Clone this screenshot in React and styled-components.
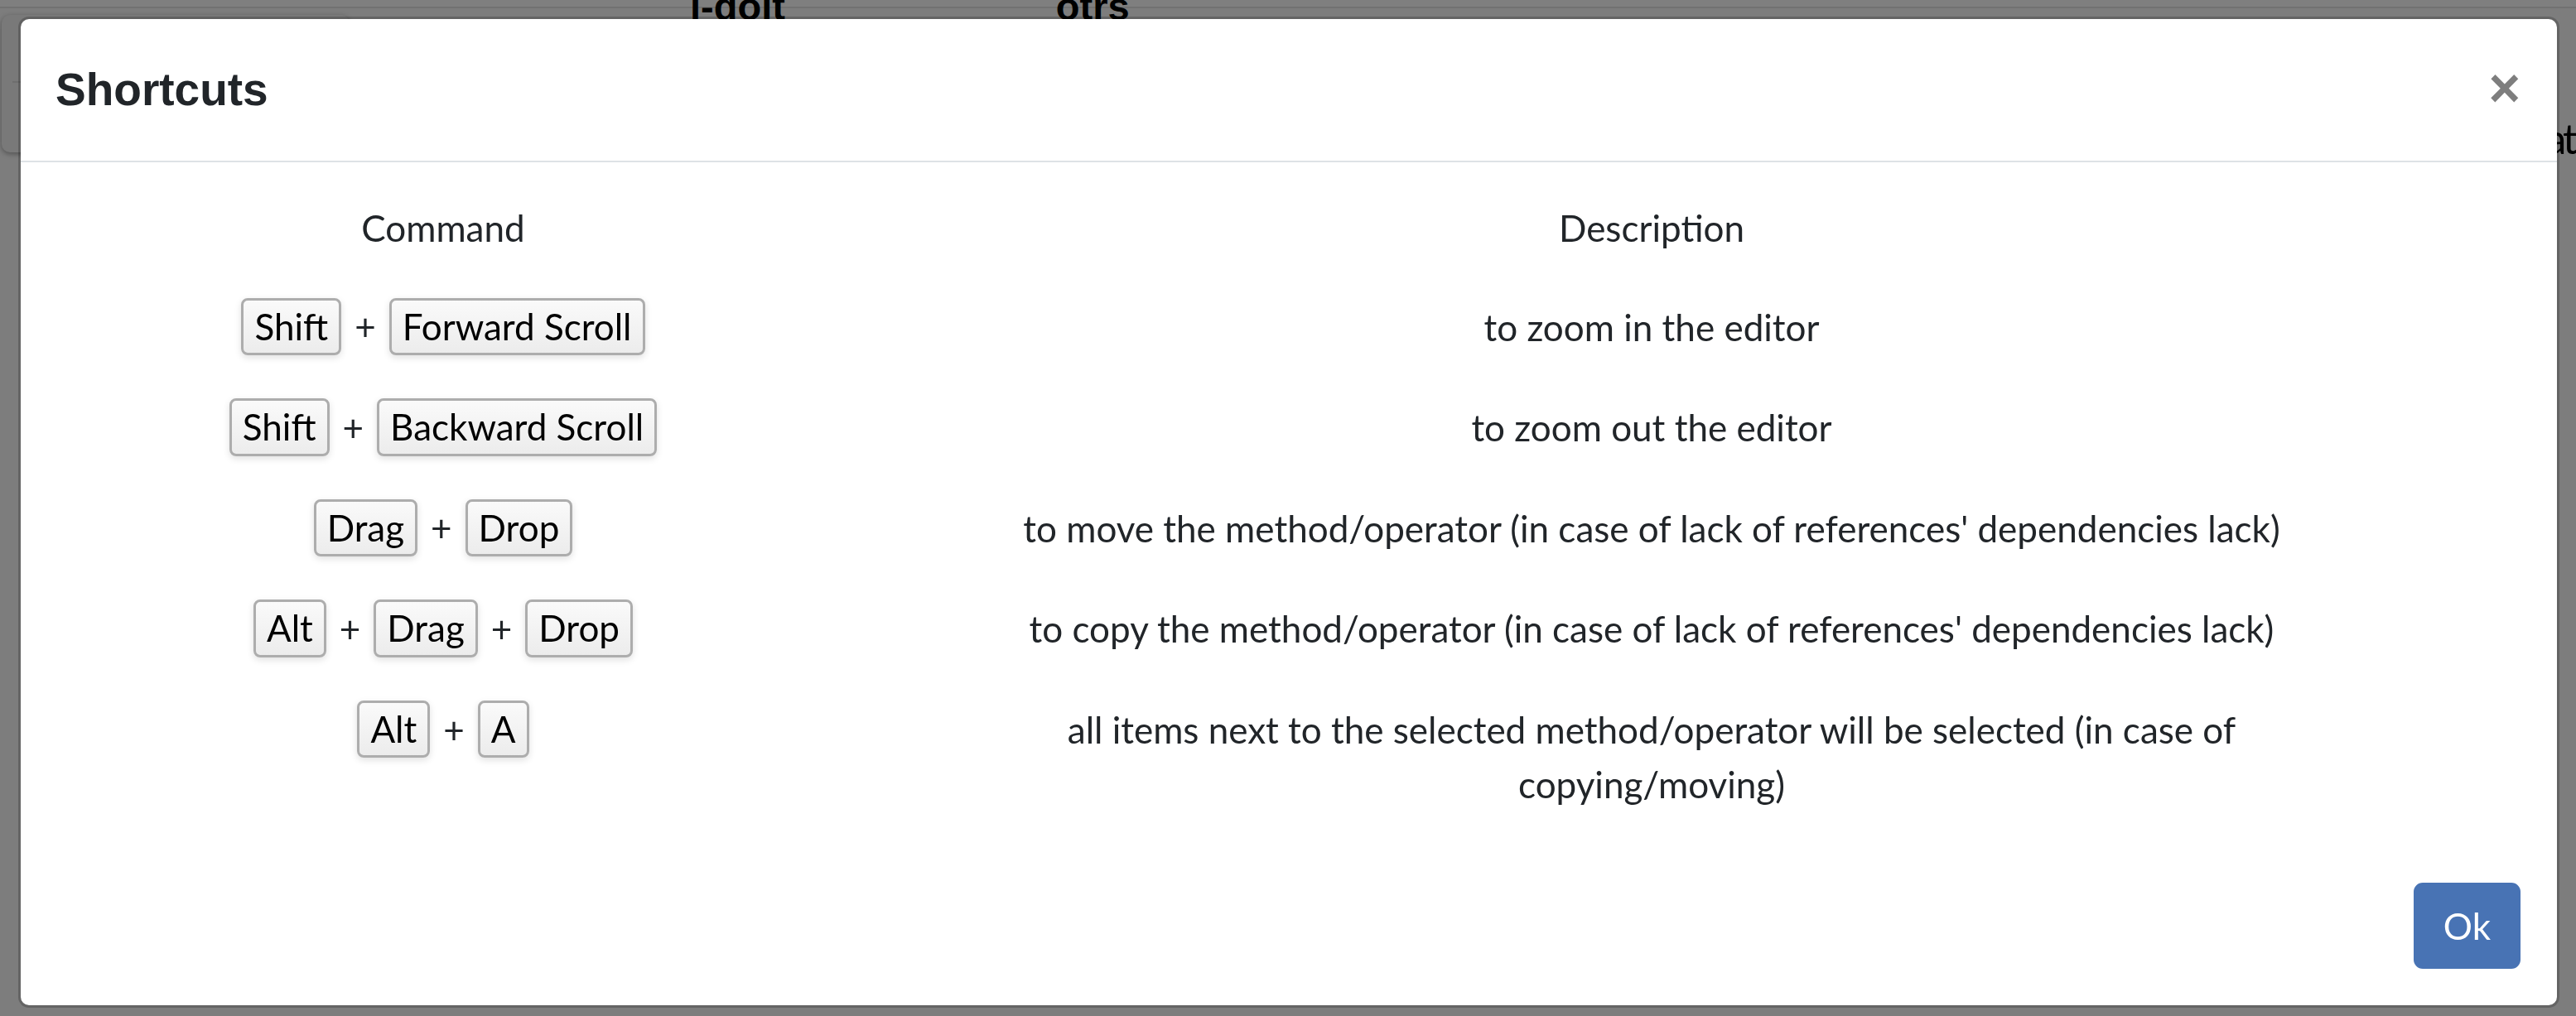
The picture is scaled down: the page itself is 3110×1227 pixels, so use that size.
import React from 'react';
import styled, { createGlobalStyle } from 'styled-components';

const GlobalStyle = createGlobalStyle`
  html, body {
    margin: 0;
    padding: 0;
  }
  body {
    width: 3110px;
    height: 1227px;
    overflow: hidden;
    background: #fff;
    font-family: Lato, "Open Sans", sans-serif;
  }
`;

// page under the backdrop
const Page = styled.div`
  height: 1227px;
  background: #fafafa;
`;

const BgHeader = styled.div`
  display: flex;
  align-items: flex-start;
  height: 8px;
  padding-left: 833px;
  gap: 327px;
  background: #fff;
  border-bottom: 2px solid #e2e2e2;
`;

const NavLabel = styled.span`
  margin-top: -16px;
  font: 700 47px/1 "Liberation Sans", Arial, sans-serif;
  color: #000;
`;

const BgBody = styled.div`
  display: flex;
  justify-content: space-between;
  align-items: flex-start;
  padding: 8px 2px 0 2px;
`;

const SideCard = styled.div`
  width: 420px;
  height: 166px;
  background: #f2f2f2;
  border-radius: 10px;
  box-shadow: 0 2px 6px rgba(0, 0, 0, 0.35);
`;

const SideCardHead = styled.div`
  height: 80px;
  margin-left: 13px;
  border-bottom: 2px solid #ddd;
`;

const RightLabel = styled.span`
  margin-top: 124px;
  font: 400 50px/1 Lato, sans-serif;
  letter-spacing: -4px;
  color: #000;
`;

const Backdrop = styled.div`
  position: fixed;
  inset: 0;
  background: rgba(0, 0, 0, 0.5);
`;

const ModalLayer = styled.div`
  position: fixed;
  inset: 0;
  display: flex;
  align-items: flex-start;
  padding: 20px 0 0 22px;
`;

const Modal = styled.div`
  width: 3068px;
  box-sizing: border-box;
  background: #fff;
  background-clip: padding-box;
  border: 3px solid rgba(0, 0, 0, 0.2);
  border-radius: 13px;
  color: #212529;
`;

const Header = styled.div`
  display: flex;
  align-items: flex-start;
  justify-content: space-between;
  padding: 44px 44px 44px 42px;
  border-bottom: 2px solid #dee2e6;
`;

const Title = styled.h5`
  margin: 0;
  font: 700 55px/1.5 "Liberation Sans", Arial, sans-serif;
  color: #212529;
`;

const Close = styled.button`
  align-self: center;
  margin: -4px 0 0 auto;
  padding: 0;
  background: transparent;
  border: 0;
  font: 700 66px/1 "Liberation Sans", Arial, sans-serif;
  color: #000;
  opacity: 0.5;
  text-shadow: 0 3px 0 #fff;
  cursor: pointer;
`;

const Body = styled.div`
  padding: 46px 44px 42px;
`;

const Table = styled.div`
  display: grid;
  grid-template-columns: 932px 1986px;
  row-gap: 52px;
  align-items: start;
  font-size: 44px;
  line-height: 1.5;
`;

const HeadCell = styled.div`
  text-align: center;
  font-weight: 400;
`;

const CommandCell = styled.div`
  display: flex;
  justify-content: center;
  align-items: center;
  gap: 16px;
`;

const Kbd = styled.span`
  display: inline-block;
  padding: 1px 13px;
  font-size: 44px;
  line-height: 1.4;
  color: #000;
  background: linear-gradient(#fafafa, #ececec);
  border: 3px solid #adadad;
  border-radius: 8px;
  box-shadow: 0 3px 8px rgba(0, 0, 0, 0.12);
`;

const Plus = styled.span`
  color: #212529;
`;

const DescCell = styled.div`
  max-width: 1700px;
  margin: 0 auto;
  padding-top: 2px;
  text-align: center;
`;

const Footer = styled.div`
  display: flex;
  justify-content: flex-end;
  padding: 44px;
`;

const OkButton = styled.button`
  padding: 16px 33px;
  font: 400 44px/1.5 Lato, sans-serif;
  color: #fff;
  background: #4873b4;
  border: 3px solid #4873b4;
  border-radius: 11px;
  cursor: pointer;
`;

const shortcuts = [
  { keys: ['Shift', 'Forward Scroll'], text: 'to zoom in the editor' },
  { keys: ['Shift', 'Backward Scroll'], text: 'to zoom out the editor' },
  {
    keys: ['Drag', 'Drop'],
    text: "to move the method/operator (in case of lack of references' dependencies lack)",
  },
  {
    keys: ['Alt', 'Drag', 'Drop'],
    text: "to copy the method/operator (in case of lack of references' dependencies lack)",
  },
  {
    keys: ['Alt', 'A'],
    text: 'all items next to the selected method/operator will be selected (in case of copying/moving)',
  },
];

const KeyCombo = ({ keys }) => (
  <CommandCell>
    {keys.map((k, i) => (
      <React.Fragment key={k + i}>
        {i > 0 && <Plus>+</Plus>}
        <Kbd>{k}</Kbd>
      </React.Fragment>
    ))}
  </CommandCell>
);

export default function App() {
  return (
    <>
      <GlobalStyle />
      <Page>
        <BgHeader>
          <NavLabel>i-doit</NavLabel>
          <NavLabel>otrs</NavLabel>
        </BgHeader>
        <BgBody>
          <SideCard>
            <SideCardHead />
          </SideCard>
          <RightLabel>Format</RightLabel>
        </BgBody>
      </Page>
      <Backdrop />
      <ModalLayer>
        <Modal>
          <Header>
            <Title>Shortcuts</Title>
            <Close aria-label="Close">×</Close>
          </Header>
          <Body>
            <Table>
              <HeadCell>Command</HeadCell>
              <HeadCell>Description</HeadCell>
              {shortcuts.map((s) => (
                <React.Fragment key={s.text}>
                  <KeyCombo keys={s.keys} />
                  <DescCell>{s.text}</DescCell>
                </React.Fragment>
              ))}
            </Table>
          </Body>
          <Footer>
            <OkButton>Ok</OkButton>
          </Footer>
        </Modal>
      </ModalLayer>
    </>
  );
}
